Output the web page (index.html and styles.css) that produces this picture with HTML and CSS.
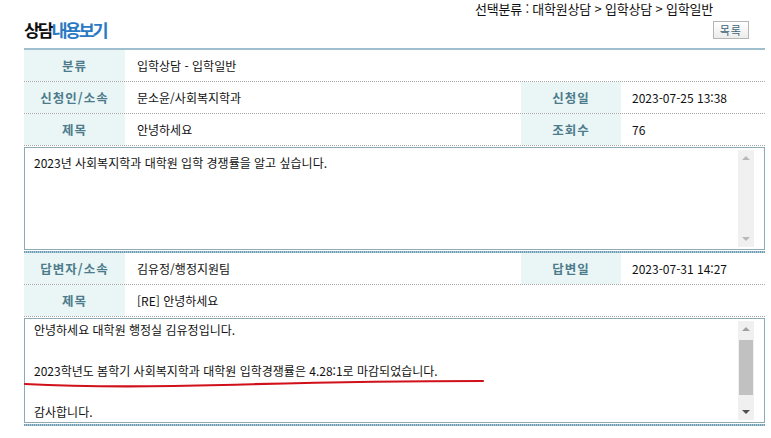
FILE: index.html
```html
<!DOCTYPE html>
<html lang="ko">
<head>
<meta charset="utf-8">
<link rel="stylesheet" href="styles.css">
</head>
<body>
<div class="page">
  <div class="crumb">선택분류 : 대학원상담 &gt; 입학상담 &gt; 입학일반</div>
  <div class="head">
    <h1 class="title"><span class="t1">상담</span><span class="t2">내용보기</span></h1>
    <button class="btn">목록</button>
  </div>
  <div class="board">
    <div class="row">
      <div class="lbl">분류</div>
      <div class="val span3">입학상담 - 입학일반</div>
    </div>
    <div class="row">
      <div class="lbl">신청인/소속</div>
      <div class="val">문소윤/사회복지학과</div>
      <div class="lbl">신청일</div>
      <div class="val v2">2023-07-25 13:38</div>
    </div>
    <div class="row">
      <div class="lbl">제목</div>
      <div class="val">안녕하세요</div>
      <div class="lbl">조회수</div>
      <div class="val v2">76</div>
    </div>
    <div class="box b1">
      <div class="content">2023년 사회복지학과 대학원 입학 경쟁률을 알고 싶습니다.</div>
      <div class="sbar">
        <span class="arr up"></span>
        <span class="track"></span>
        <span class="arr down"></span>
      </div>
    </div>
    <div class="thick"></div>
    <div class="row">
      <div class="lbl">답변자/소속</div>
      <div class="val">김유정/행정지원팀</div>
      <div class="lbl">답변일</div>
      <div class="val v2">2023-07-31 14:27</div>
    </div>
    <div class="row">
      <div class="lbl">제목</div>
      <div class="val span3">[RE] 안녕하세요</div>
    </div>
    <div class="box b2">
      <div class="content c2">
        <p>안녕하세요 대학원 행정실 김유정입니다.</p>
        <p>&nbsp;</p>
        <p>2023학년도 봄학기 사회복지학과 대학원 입학경쟁률은 4.28:1로 마감되었습니다.</p>
        <p>&nbsp;</p>
        <p>감사합니다.</p>
        <svg class="mark" width="470" height="12" viewBox="0 0 470 12"><path d="M2 6 C 60 9, 120 9, 200 7 S 340 3, 460 3" stroke="#d0101a" stroke-width="2.2" fill="none" stroke-linecap="round"/></svg>
      </div>
      <div class="sbar">
        <span class="arr up dark"></span>
        <span class="track"><span class="thumb"></span></span>
        <span class="arr down dark"></span>
      </div>
    </div>
    <div class="thick"></div>
  </div>
</div>
</body>
</html>
```
FILE: styles.css
```css
html, body { margin: 0; padding: 0; background: #fff; }
body { font-family: "Noto Sans CJK KR", "Noto Sans", sans-serif; font-size: 12px; color: #111; }
.page { width: 741px; padding-left: 24px; }
.crumb { text-align: right; padding-right: 52px; padding-top: 2px; font-size: 13px; line-height: 14px; height: 14px; color: #111; letter-spacing: -0.2px; }
.head { display: flex; justify-content: space-between; align-items: center; height: 32px; }
.title { margin: 0 0 4px; font-size: 17.5px; font-weight: bold; letter-spacing: -2.4px; line-height: 20px; }
.t1 { color: #111; }
.t2 { color: #2a79c4; }
.btn { font-family: inherit; font-size: 11px; line-height: 14px; height: 18px; padding: 0 6px; margin: 0 16px 4px 0; border: 1px solid #b5b5b5; background: linear-gradient(#ffffff, #ececec); color: #3d6578; letter-spacing: 1px; }
.board { border-top: 2px solid #9fbfce; }
.row { display: grid; grid-template-columns: 101px 396px 100px 144px; height: 31px; border-bottom: 1px dotted #a8a8a8; }
.lbl { background: #e9f6f5; color: #4d7b8b; font-weight: bold; font-size: 12.5px; letter-spacing: 1px; display: flex; align-items: center; justify-content: center; }
.val { display: flex; align-items: center; padding-left: 12px; font-size: 12px; }
.v2 { padding-left: 11px; }
.span3 { grid-column: 2 / 5; }
.box { display: flex; border: 1px solid #8faab7; margin-top: 1px; }
.b1 { height: 101px; }
.b2 { height: 103px; }
.content { flex: 1; padding: 5px 0 0 9px; line-height: 20px; }
.c2 { position: relative; padding-top: 1px; }
.c2 p { margin: 0; line-height: 20.5px; }
.mark { position: absolute; left: -2px; top: 59px; }
.sbar { width: 16px; margin: 2px 10px 2px 0; background: #f0f0f0; display: flex; flex-direction: column; align-items: center; }
.arr { height: 14px; width: 0; flex: none; }
.arr.up { border-left: 4px solid transparent; border-right: 4px solid transparent; border-bottom: 4px solid #b8b8b8; height: 0; margin: 6px 0 6px; }
.arr.down { border-left: 4px solid transparent; border-right: 4px solid transparent; border-top: 4px solid #b8b8b8; height: 0; margin: 6px 0 6px; }
.arr.up.dark { border-bottom-color: #a0a0a0; }
.arr.down.dark { border-top-color: #505050; }
.track { flex: 1; width: 16px; display: block; }
.thumb { display: block; width: 14px; margin: 0 auto; height: 55px; margin-top: 3px; background: #c1c1c1; }
.thick { height: 2px; margin-top: 1px; background: repeating-linear-gradient(90deg, #6f9cb2 0 1px, #a9c6d4 1px 2px); }
```
